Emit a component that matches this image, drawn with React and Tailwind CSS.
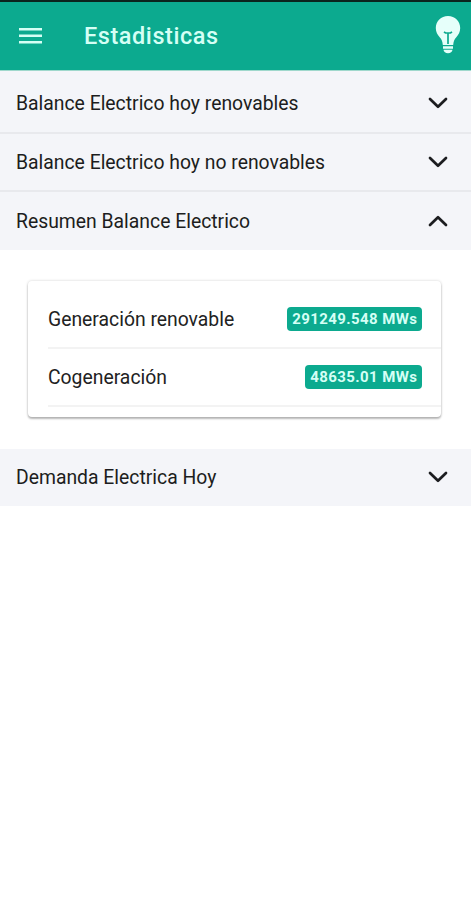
const Chevron = ({ open }) => (
    <svg className={`mb-0.5 w-[22px] h-[22px] ${open ? 'rotate-180' : ''}`} fill="none" viewBox="0 0 22 22" stroke="currentColor">
        <path strokeLinecap="round" strokeLinejoin="round" strokeWidth={2.7} d="M3 7l8 7.800 8-7.800" />
    </svg>
);

const AccordionRow = ({ title, open, className = '' }) => (
    <button className={`flex w-full items-center justify-between bg-[#f4f5f9] pl-4 pr-[22px] text-left text-[#1c1d20] ${className}`}>
        <span className="text-[19.35px] leading-6 whitespace-nowrap">{title}</span>
        <Chevron open={open} />
    </button>
);

const items = [
    { label: 'Generación renovable', value: '291249.548 MWs' },
    { label: 'Cogeneración', value: '48635.01 MWs' },
];

const App = () => {
    return (
        <div className="min-h-screen bg-white font-['Roboto',sans-serif]">
            {/* Toolbar */}
            <header className="flex h-[70px] items-center border-t-2 border-[#0b241d] bg-[#0caa8f] text-[#d5fff5]">
                <svg className="ml-[19px] h-4 w-[23px]" viewBox="0 0 23 16" fill="currentColor">
                    <path d="M0 0h23v2.6H0zM0 6.5h23v2.6H0zM0 13h23v2.6H0z" />
                </svg>
                <h1 className="ml-[42px] pt-px text-[23.5px] font-medium tracking-[0.55px]">Estadisticas</h1>
                <svg className="mb-[3px] ml-auto mr-[10px] h-[38px] w-[26px] text-[#e6fffa]" viewBox="0 0 26 38">
                    <path fill="currentColor" d="M13 0C6 0 .8 5.300.8 12c0 4 1.700 6.800 3.900 9.300 1.900 2.200 2.800 4 3.100 7.700h10.400c.3-3.700 1.200-5.500 3.100-7.700 2.200-2.500 3.900-5.300 3.900-9.300C25.200 5.300 20 0 13 0z" />
                    <path fill="none" stroke="#0caa8f" strokeWidth="1.700" d="M9 15.800l1.500 1.200h5l1.500-1.200M13 17v11" />
                    <path fill="currentColor" d="M8 30.300h10v2.400H8zM8.500 33.800h9c-.3 2.200-2 3.400-4.500 3.400s-4.200-1.200-4.500-3.400z" />
                </svg>
            </header>

            <AccordionRow title="Balance Electrico hoy renovables" className="h-16 border-t border-b-2 border-t-[#9fd8cc] border-b-[#e8e9ed] pt-1" />
            <AccordionRow title="Balance Electrico hoy no renovables" className="h-[58px] border-b-2 border-[#e8e9ed] pt-px" />
            <AccordionRow title="Resumen Balance Electrico" open className="h-[58px] pt-px" />

            <div className="h-[199px] pl-7 pr-[30px] pt-[31px]">
                <div className="h-[136px] rounded pl-5 pt-[10px] shadow-[0_2px_2px_rgba(0,0,0,0.25),0_0_3px_rgba(0,0,0,0.18)]">
                    {items.map((item) => (
                        <div key={item.label} className="flex h-[58px] items-center justify-between border-b-2 border-[#f3f3f3] pr-[19px]">
                            <span className="pt-0.5 text-[19.35px] text-[#222]">{item.label}</span>
                            <span className="flex h-6 items-center rounded bg-[#0caa8f] pl-[5px] pr-[4.500px] text-[15px] font-bold tracking-[0.42px] text-[#d5fff5]">{item.value}</span>
                        </div>
                    ))}
                </div>
            </div>

            <AccordionRow title="Demanda Electrica Hoy" className="h-[57px]" />
        </div>
    );
};

export default App;
